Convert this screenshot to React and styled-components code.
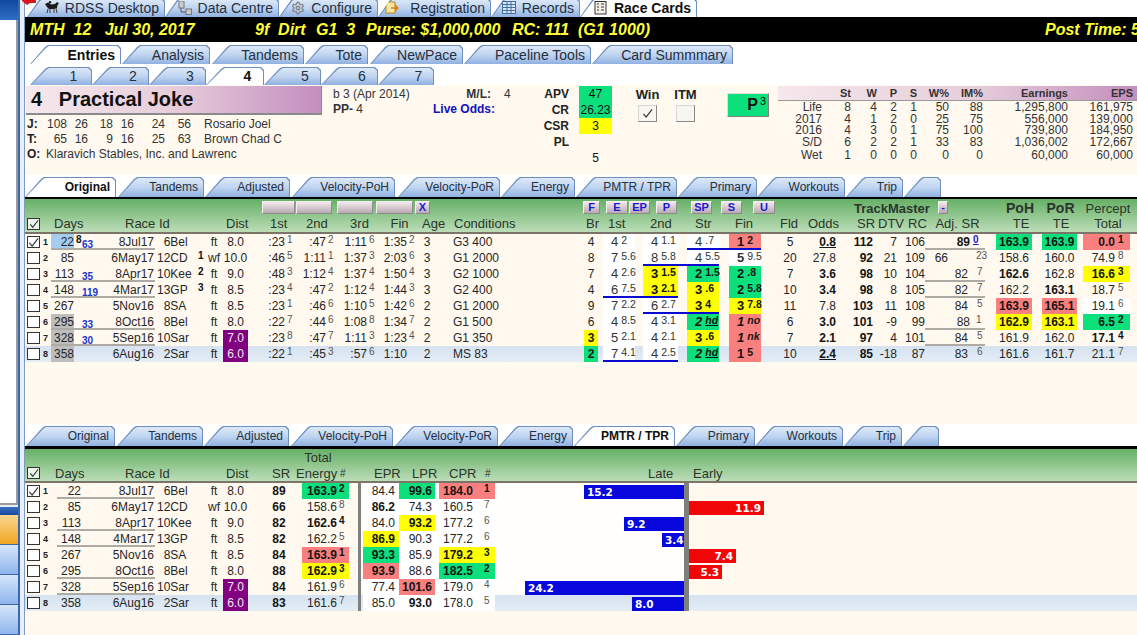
import React from 'react';
import styled, { createGlobalStyle } from 'styled-components';
import { Settings } from 'lucide-react';

const Global = createGlobalStyle`
  html, body { margin: 0; padding: 0; width: 1137px; height: 635px; overflow: hidden; background: #fff; }
  body { font-family: "Liberation Sans", Arial, sans-serif; font-size: 12px; color: #222; }
  * { box-sizing: border-box; }
`;

const TONES = {
  green: '#0be07c', yellow: '#ffff00', red: '#fa8080', blue: '#a5cbef',
  gray: '#bdbdbd', purple: '#800080', white: '#ffffff',
};
const CREAM = '#fff9ef';

const tpl = (list) => list.map(([n, w]) => `[${n}] ${w}px`).join(' ') + ' [end] 1fr';

const T1 = tpl([
  ['chk', 17], ['no', 9], ['days', 23], ['ds', 7], ['gap', 14], ['date', 60], ['track', 41], ['rs', 9],
  ['surf', 18], ['dist', 25], ['p1', 37], ['p1s', 7], ['p2', 34], ['p2s', 6], ['p3', 35], ['p3s', 7],
  ['p4', 33], ['p4s', 7], ['age', 26], ['cond', 144], ['br', 14], ['g0', 5], ['r1', 32], ['g1', 8],
  ['r2', 35], ['r2e', 9], ['r3', 32], ['r3e', 10], ['r4', 32], ['r4e', 14], ['fld', 30], ['odds', 31],
  ['sr', 37], ['dtv', 24], ['rc', 28], ['adj', 45], ['adjs', 15], ['adje', 11], ['poh', 36], ['g5', 10],
  ['por', 35], ['g6', 6], ['pct', 47],
]);

const T2 = tpl([
  ['chk', 17], ['no', 15], ['days', 24], ['date', 74], ['track', 41], ['g0', 9], ['surf', 18], ['dist', 25],
  ['g1', 14], ['sr', 34], ['g2', 6], ['en', 47], ['g3', 9], ['bar', 3], ['g4', 2], ['epr', 36], ['lpr', 36],
  ['g5', 4], ['cpr', 56], ['late', 189], ['div', 5],
]);

/* ---------- Shell ---------- */
const Root = styled.div`
  position: relative; display: flex; width: 1137px; height: 635px; overflow: hidden; background: #fff;
`;
const RedMark = styled.svg`
  position: absolute; left: 22px; top: 0; width: 14px; height: 5px; z-index: 3;
`;
const Side = styled.aside`
  flex: none; width: 25px; height: 100%; display: flex;
  border-right: 1px solid #7f9db9; background: #e9eff9;
`;
const Nav = styled.div`
  width: 20px; height: 100%; display: flex; flex-direction: column;
  border-right: 2px solid #3a69b0;
`;
const NavTop = styled.div`
  height: 20px; flex: none; background: linear-gradient(#0f4aa0, #2f6fc4);
`;
const NavBlank = styled.div`
  flex: 1; background: #fff; border-right: 2px solid #9a9a9a; border-bottom: 2px solid #9a9a9a;
`;
const NavHead = styled.div`
  height: 8px; flex: none; margin-top: 2px; background: linear-gradient(#3a6fc0, #174a9c);
`;
const NavTile = styled.div`
  height: 30px; flex: none; border-bottom: 1px solid #3e679f;
  background: ${(p) => (p.$on ? 'linear-gradient(#fbd68f, #f0a522)' : 'linear-gradient(#d6e6fb, #8fb5ec)')};
`;
const Main = styled.main`
  flex: 1; min-width: 0; display: flex; flex-direction: column; height: 100%; background: #fff;
`;

/* ---------- Tabs ---------- */
const TabStrip = styled.div`
  flex: none; display: flex; align-items: flex-end; height: ${(p) => p.$h}px;
  padding-top: ${(p) => p.$top || 0}px; background: #fff; overflow: hidden;
`;
const Tab = styled.div`
  --s: ${(p) => p.$s || 15}px;
  position: relative; flex: none; display: flex; align-items: center;
  justify-content: ${(p) => (p.$center ? 'center' : 'flex-end')};
  width: ${(p) => p.$w}px; height: ${(p) => p.$h}px; margin-left: ${(p) => p.$ml}px;
  padding: ${(p) => (p.$center ? '0 0 0 25px' : '0 6px 0 0')};
  font-size: ${(p) => p.$fs}px; font-weight: ${(p) => (p.$on ? 700 : 400)};
  color: ${(p) => (p.$on ? '#111' : '#24303f')}; white-space: nowrap;
  background: #6f8fc0;
  clip-path: polygon(0 100%, var(--s) 2px, calc(var(--s) + 3px) 0, calc(100% - 3px) 0, 100% 3px, 100% 100%);
  &::before {
    content: ''; position: absolute; inset: 1px 1px 0 1px;
    background: ${(p) => (p.$on ? '#fff' : 'linear-gradient(#dde9f8, #bfd4f0 50%, #90b1e1)')};
    clip-path: polygon(0 100%, var(--s) 2px, calc(var(--s) + 3px) 0, calc(100% - 3px) 0, 100% 3px, 100% 100%);
  }
`;
const TabText = styled.span`
  position: relative; display: inline-flex; align-items: center; gap: 5px;
`;
const TopIcon = styled.span`
  display: inline-flex; width: 14px; height: 14px; margin-right: ${(p) => p.$mr || 1}px;
`;

/* ---------- Race banner ---------- */
const Banner = styled.header`
  flex: none; height: 25px; display: flex; align-items: center; padding-left: 5px;
  background: #000; color: #ffff33; font-size: 16px; font-weight: 700; font-style: italic;
  white-space: pre; overflow: hidden;
`;
const Seg = styled.span`
  flex: none; width: ${(p) => p.$w}px;
`;
const Gap = styled.div`
  flex: none; height: ${(p) => p.$h}px; background: ${(p) => p.$bg || '#fff'};
`;

/* ---------- Horse panel ---------- */
const Panel = styled.section`
  flex: none; height: 90px; display: flex; background: ${CREAM};
`;
const HorseCol = styled.div`
  flex: none; width: 303px; padding: 1px 0 0 1px;
`;
const NameBar = styled.div`
  width: 296px; height: 29px; display: flex; align-items: center; padding-left: 5px;
  background: linear-gradient(90deg, #f6e8ec, #e6cdda 50%, #c48ebe);
  border-right: 1px solid #8a8a8a; border-bottom: 2px solid #8a8a8a;
  font-size: 20px; font-weight: 700; color: #111; white-space: pre;
`;
const People = styled.div`
  display: grid; grid-template-columns: 19px 21px 21px 25px 21px 31px 26px 1fr;
  grid-auto-rows: 15px; margin: 2px 0 0 -1px; padding-left: 2px; line-height: 15px; color: #333;
`;
const PLabel = styled.b`
  color: #222; font-size: 12px;
`;
const PNum = styled.span`
  text-align: right;
`;
const PName = styled.span`
  padding-left: 13px; white-space: nowrap;
`;
const POwner = styled.span`
  grid-column: 2 / -1; white-space: nowrap;
`;
const MetaCol = styled.div`
  flex: none; width: 192px; display: grid; grid-template-columns: 100px 58px 1fr;
  grid-auto-rows: 15px; padding: 2px 0 0 5px; line-height: 15px; color: #333; white-space: nowrap;
`;
const MetaLabel = styled.b`
  text-align: right; color: ${(p) => p.$c || '#333'};
`;
const MetaVal = styled.span`
  padding-left: 13px;
`;
const RateCol = styled.div`
  flex: none; width: 92px; display: grid; grid-template-columns: 49px 10px 33px; grid-auto-rows: 16px;
  padding-top: 1px; line-height: 16px;
`;
const RateLabel = styled.b`
  grid-column: 1; text-align: right; color: #222;
`;
const RateVal = styled.div`
  grid-column: 3; text-align: center; color: #111; font-weight: ${(p) => (p.$b ? 700 : 400)};
  background: ${(p) => TONES[p.$tone] || 'transparent'};
`;
const BetCol = styled.div`
  flex: none; width: 115px; display: flex; gap: 13px; padding: 2px 0 0 23px;
`;
const BetGroup = styled.div`
  display: flex; flex-direction: column; align-items: center; width: 25px;
  font-size: 13px; font-weight: 700; color: #222; line-height: 15px;
`;
const BetBox = styled.div`
  width: 19px; height: 17px; margin-top: 3px; display: flex; align-items: center; justify-content: center;
  background: #f8f6f0; border: 1px solid; border-color: #d8d8d8 #888 #888 #d8d8d8;
`;
const PButton = styled.div`
  flex: none; width: 42px; height: 24px; margin-top: 8px; display: flex; justify-content: flex-end; align-items: flex-start;
  padding: 1px 2px 0 0; background: #0be07c; font-size: 16px; font-weight: 700; color: #111; line-height: 20px;
  border: 1px solid; border-color: #e0e0e0 #808080 #808080 #e0e0e0;
  & sup { font-size: 11px; font-weight: 400; line-height: 12px; margin: 0 0 0 2px; }
`;
const Stats = styled.div`
  flex: none; width: 359px; margin: 1px 0 0 9px; 
`;
const statCols = '44px 29px 26px 20px 20px 32px 34px 85px 65px 4px';
const StatHead = styled.div`
  display: grid; grid-template-columns: ${statCols}; height: 15px; line-height: 14px;
  font-size: 11px; font-weight: 700; color: #333; text-align: right;
  background: linear-gradient(90deg, #f6e8ec, #e6cdda 55%, #c48ebe); border-bottom: 1px solid #999;
`;
const StatRow = styled.div`
  display: grid; grid-template-columns: ${statCols}; height: ${(p) => p.$h}px; line-height: ${(p) => p.$h}px;
  text-align: right; color: #333;
`;

/* ---------- Tables ---------- */
const BlackLine = styled.div`
  flex: none; height: ${(p) => p.$h}px; background: #000;
`;
const Head = styled.div`
  flex: none; height: ${(p) => p.$h}px; display: flex; flex-direction: column;
  background: linear-gradient(#66b066, #bcddb8);
  border-bottom: 2px solid #7c7468;
  color: #2b352b; font-size: 13px;
`;
const HeadStrip = styled.div`
  flex: 1; display: flex; align-items: ${(p) => p.$al || 'center'}; position: relative; white-space: nowrap;
`;
const HLabel = styled.div`
  flex: none; width: ${(p) => p.$w}px; margin-left: ${(p) => p.$ml}px; text-align: center;
  font-weight: ${(p) => (p.$b ? 700 : 400)}; font-size: ${(p) => p.$fs || 13}px; line-height: 15px;
`;
const HBtn = styled.div`
  flex: none; width: ${(p) => p.$w}px; height: 13px; margin-left: ${(p) => p.$ml}px; align-self: flex-start; margin-top: 2px;
  display: flex; align-items: center; justify-content: center; background: linear-gradient(#f3e9ed, #b9aab2);
  border: 1px solid; border-color: #f2eef0 #8b8b8b #8b8b8b #f2eef0;
  font-size: 11px; font-weight: 700; color: #1a1acc; line-height: 11px;
`;
const HBox = styled.div`
  flex: none; width: 13px; height: 12px; margin-left: ${(p) => p.$ml}px;
  background: #e9f3e7; border: 1px solid #333; display: flex; align-items: center; justify-content: center;
`;
const Rows = styled.div`
  flex: none; height: 128px; background: ${CREAM};
`;
const Row = styled.div`
  position: relative; display: grid; grid-template-columns: ${(p) => p.$tpl}; grid-template-rows: 16px; height: 16px;
  line-height: 16px; color: #262626;
  background: ${(p) => (p.$hi ? 'linear-gradient(#d6e2f0, #e4edf6)' : 'transparent')};
  & > * { grid-row: 1; }
`;
const C = styled.div`
  grid-column: ${(p) => p.$c} / span ${(p) => p.$span || 1};
  text-align: ${(p) => p.$a || 'left'}; white-space: nowrap; min-width: 0;
  padding: 0 ${(p) => p.$pr || 0}px 0 ${(p) => p.$pl || 0}px;
  font-weight: ${(p) => (p.$b ? 700 : 400)};
  text-decoration: ${(p) => (p.$u ? 'underline' : 'none')};
  background: ${(p) => TONES[p.$tone] || 'transparent'};
  color: ${(p) => (p.$tone === 'purple' ? '#f4e8f4' : p.$b ? '#151515' : 'inherit')};
`;
const Band = styled.div`
  grid-column: ${(p) => p.$from} / ${(p) => p.$to}; background: #fff;
`;
const Sup = styled.div`
  grid-column: ${(p) => p.$c} / span 1; font-size: 10px; line-height: 11px; padding-left: ${(p) => p.$pl || 2}px;
  color: ${(p) => (p.$b ? '#111' : '#555')}; font-weight: ${(p) => (p.$b ? 700 : 400)};
  ${(p) => (p.$link ? 'color:#1a1acc; text-decoration:underline; font-weight:700;' : '')}
`;
const InSup = styled.span`
  font-size: 10px; line-height: 11px; margin-left: ${(p) => p.$ml || 2}px; align-self: flex-start;
  color: ${(p) => (p.$b ? '#111' : '#555')}; font-weight: ${(p) => (p.$b ? 700 : 400)};
`;
const Split = styled.div`
  grid-column: ${(p) => p.$c} / span 1; display: flex; white-space: nowrap;
  background: ${(p) => TONES[p.$tone] || 'transparent'};
  font-weight: ${(p) => (p.$b ? 700 : 400)}; color: ${(p) => (p.$b ? '#151515' : 'inherit')};
`;
const SplitNum = styled.span`
  flex: none; width: ${(p) => p.$w}px; text-align: right;
`;
const Small = styled.div`
  grid-column: ${(p) => p.$c} / span 1; font-size: 10px; font-weight: 700; color: #2233cc;
  line-height: 10px; padding: 6px 0 0 1px; position: relative;
`;
const BoxCell = styled.div`
  grid-column: chk / span 1; width: 13px; height: 12px; margin: 2px 0 0 2px; background: #fff;
  border: 1px solid #333; display: flex; align-items: center; justify-content: center;
`;
const Num = styled.div`
  grid-column: no / span 1; font-size: 9px; font-weight: 700; padding-left: 1px; color: #222;
`;
const Rule = styled.div`
  position: absolute; grid-column: ${(p) => p.$from} / ${(p) => p.$to}; left: 0; right: 0; bottom: 0; height: 2px;
  background: ${(p) => p.$c}; z-index: 1;
`;
const Run = styled.div`
  grid-column: ${(p) => p.$c} / span 1; display: flex; padding-left: 8px;
  background: ${(p) => TONES[p.$tone] || '#fff'}; white-space: nowrap;
  font-size: 13px; font-weight: ${(p) => (p.$tone ? 700 : 400)}; color: ${(p) => (p.$tone ? '#151515' : '#333')};
  font-style: ${(p) => (p.$i ? 'italic' : 'normal')};
`;
const RunSup = styled.span`
  font-size: 10.5px; line-height: 12px; margin-left: 3px;
  ${(p) => (p.$u ? 'text-decoration: underline;' : '')}
`;
const TrackCell = styled.div`
  grid-column: ${(p) => p.$c} / span 1; display: flex;
  justify-content: ${(p) => (p.$end ? 'flex-end' : 'flex-start')}; align-items: flex-end;
  background: ${(p) => (p.$plain ? 'transparent' : '#fffefb')};
`;
const BarCell = styled.div`
  grid-column: ${(p) => p.$c} / span 1; display: flex; align-items: flex-end;
  justify-content: ${(p) => (p.$end ? 'flex-end' : 'flex-start')};
`;
const Bar = styled.div`
  height: 14px; flex: none; padding: 0 3px; line-height: 14px; font-family: "DejaVu Sans", sans-serif;
  font-size: 10.5px; font-weight: 700; color: #fff; background: ${(p) => p.$c};
  text-align: ${(p) => (p.$end ? 'right' : 'left')}; overflow: hidden; white-space: nowrap;
`;
const Divider = styled.div`
  grid-column: ${(p) => p.$c} / span 1; background: #7f7f7f;
`;
const Fill = styled.div`
  flex: 1; background: ${CREAM};
`;

/* ---------- Small drawings ---------- */
const Tick = ({ s = 11 }) => (
  <svg width={s} height={s} viewBox="0 0 12 12">
    <path d="M1.5 6.5 L4.5 10 L11 1.5" fill="none" stroke="#333" strokeWidth="1.3" />
  </svg>
);
const HorseIcon = () => (
  <svg width="14" height="14" viewBox="0 0 14 14">
    <path d="M0 3 L3 1.5 L6 3.5 L10 3 L12 1 L14 2.5 L12.5 4 L12 7 L9 8 L4 8 L2 6 Z" fill="#1b1b1b" />
    <path d="M3 8 L2 12 M5 8 L5 12 M9 8 L9 12 M11 7 L12 12" stroke="#444" strokeWidth="1.1" />
    <circle cx="5" cy="1.3" r="1.2" fill="#1b1b1b" />
  </svg>
);
const DataIcon = () => (
  <svg width="14" height="14" viewBox="0 0 14 14">
    <rect x="1" y="0" width="5" height="7" fill="#c9cdd2" stroke="#777" />
    <rect x="8" y="8" width="5.5" height="5.5" fill="#c9cdd2" stroke="#777" />
    <path d="M3 7 V11 H8" fill="none" stroke="#555" />
  </svg>
);
const RegIcon = () => (
  <svg width="14" height="14" viewBox="0 0 14 14">
    <rect x="1" y="1" width="9" height="11" fill="#f8e7a0" stroke="#b88a1e" />
    <path d="M6 7 L13 7 M10 4 L13 7 L10 10" fill="none" stroke="#d9801a" strokeWidth="1.5" />
  </svg>
);
const GridIcon = () => (
  <svg width="14" height="14" viewBox="0 0 14 14">
    <rect x="0.5" y="0.5" width="13" height="12" fill="#dbe6f2" stroke="#40709f" />
    <path d="M0.5 3.5 H13.5 M0.5 6.5 H13.5 M0.5 9.5 H13.5 M5 0.5 V12.5 M9 0.5 V12.5" stroke="#40709f" />
  </svg>
);
const CardIcon = () => (
  <svg width="14" height="14" viewBox="0 0 14 14">
    <rect x="1" y="0.5" width="11" height="12.5" fill="#f4f2e8" stroke="#333" />
    <path d="M3 3 H5 M3 6 H5 M3 9 H5 M7 3 H10 M7 6 H10 M7 9 H10" stroke="#333" />
  </svg>
);

/* ---------- Data ---------- */
const ORIGIN = 25;
const place = (items) => {
  let prev = ORIGIN;
  return items.map((it) => {
    const ml = it[0] - prev;
    prev = it[1];
    return { x0: it[0], w: it[1] - it[0], ml, label: it[2], opt: it[3] || {} };
  });
};

const TOP = place([
  [27, 165, 'RDSS Desktop', { icon: <HorseIcon />, mr: 1 }],
  [165, 279, 'Data Centre', { icon: <DataIcon />, mr: 0 }],
  [279, 378, 'Configure', { icon: <Settings size={14} color="#8a8a8a" strokeWidth={2.4} />, mr: 0 }],
  [378, 491, 'Registration', { icon: <RegIcon />, mr: 6 }],
  [491, 580, 'Records', { icon: <GridIcon />, mr: 0 }],
  [580, 697, 'Race Cards', { icon: <CardIcon />, mr: 1, on: true }],
]);
const MAIN = place([
  [30, 121, 'Entries', { on: true }], [122, 210, 'Analysis'], [212, 304, 'Tandems'], [305, 368, 'Tote'],
  [370, 463, 'NewPace'], [464, 591, 'Paceline Tools'], [592, 733, 'Card Summmary'],
]);
const RACES = place([
  [30, 92, '1'], [92, 149, '2'], [149, 206, '3'], [206, 264, '4', { on: true }], [264, 321, '5'], [321, 378, '6'], [378, 434, '7'],
]);
const SUB1 = place([
  [25, 116, 'Original', { on: true }], [118, 204, 'Tandems'], [205, 290, 'Adjusted'], [292, 395, 'Velocity-PoH'],
  [398, 500, 'Velocity-PoR'], [501, 575, 'Energy'], [576, 677, 'PMTR / TPR'], [678, 757, 'Primary'],
  [757, 845, 'Workouts'], [846, 903, 'Trip'], [904, 941, ''],
]);
const SUB2 = place([
  [26, 115, 'Original'], [117, 203, 'Tandems'], [204, 289, 'Adjusted'], [291, 393, 'Velocity-PoH'],
  [395, 498, 'Velocity-PoR'], [499, 573, 'Energy'], [574, 675, 'PMTR / TPR', { on: true }], [676, 755, 'Primary'],
  [755, 843, 'Workouts'], [844, 902, 'Trip'], [903, 939, ''],
]);

const H1A = place([
  [262, 295, '', { btn: 1 }], [296, 332, '', { btn: 1 }], [337, 373, '', { btn: 1 }], [376, 413, '', { btn: 1 }], [415, 430, 'X', { btn: 1 }],
  [583, 600, 'F', { btn: 1 }], [606, 628, 'E', { btn: 1 }], [629, 650, 'EP', { btn: 1 }], [656, 677, 'P', { btn: 1 }],
  [691, 712, 'SP', { btn: 1 }], [721, 742, 'S', { btn: 1 }], [753, 775, 'U', { btn: 1 }],
  [854, 925, 'TrackMaster', { b: 1 }], [938, 948, '-', { btn: 1 }],
  [1006, 1034, 'PoH', { b: 1, fs: 14 }], [1046, 1075, 'PoR', { b: 1, fs: 14 }], [1083, 1133, 'Percept'],
]);
const H1B = place([
  [54, 81, 'Days'], [125, 167, 'Race Id'], [226, 248, 'Dist'], [270, 286, '1st'], [306, 327, '2nd'], [349, 370, '3rd'],
  [389, 410, 'Fin'], [422, 443, 'Age'], [454, 513, 'Conditions'], [586, 598, 'Br'], [608, 625, '1st'], [650, 670, '2nd'],
  [695, 710, 'Str'], [735, 752, 'Fin'], [780, 797, 'Fld'], [808, 838, 'Odds'], [857, 874, 'SR'], [878, 903, 'DTV'],
  [908, 925, 'RC'], [935, 980, 'Adj. SR'], [1010, 1032, 'TE'], [1050, 1072, 'TE'], [1083, 1133, 'Total'],
]);
const H2A = place([[300, 336, 'Total']]);
const H2B = place([
  [55, 82, 'Days'], [125, 167, 'Race Id'], [226, 248, 'Dist'], [272, 287, 'SR'], [296, 336, 'Energy'], [340, 344, '#', { fs: 10 }],
  [374, 399, 'EPR'], [412, 436, 'LPR'], [449, 475, 'CPR'], [485, 489, '#', { fs: 10 }], [648, 672, 'Late'], [693, 720, 'Early'],
]);

const FS = '\u2007';
const BASE = [
  { n: 1, chk: true, days: '22', ds: '8', dt: 'blue', gap: '63', date: '8Jul17', track: FS + '6Bel', dist: '8.0', surf: 'ft', rule: true },
  { n: 2, days: '85', date: '6May17', track: '12CD', rs: '1', surf: 'wf', dist: '10.0' },
  { n: 3, days: '113', gap: '35', date: '8Apr17', track: '10Kee', rs: '2', surf: 'ft', dist: '9.0', rule: true },
  { n: 4, days: '148', gap: '119', date: '4Mar17', track: '13GP', rs: '3', surf: 'ft', dist: '8.5', rule: true },
  { n: 5, days: '267', date: '5Nov16', track: FS + '8SA', surf: 'ft', dist: '8.5' },
  { n: 6, days: '295', dt: 'gray', gap: '33', date: '8Oct16', track: FS + '8Bel', surf: 'ft', dist: '8.0', rule: true },
  { n: 7, days: '328', dt: 'gray', gap: '30', date: '5Sep16', track: '10Sar', surf: 'ft', dist: '7.0', dk: true, rule: true },
  { n: 8, days: '358', dt: 'gray', date: '6Aug16', track: FS + '2Sar', surf: 'ft', dist: '6.0', dk: true },
];
const FIRST = [
  {
    pace: [[':23', '1'], [':47', '2'], ['1:11', '6'], ['1:35', '2']], age: '3', cond: 'G3 400', br: '4',
    runs: [['4', '2'], ['4', '1.1'], ['4', '.7'], ['1', '2', 'red']], fld: '5', odds: '0.8', ob: 1, ou: 1, sr: '112', dtv: '7', rc: '106',
    adj: ['89', '0', 0, 3, true], poh: ['163.9', 'green'], por: ['163.9', 'green'], pct: ['0.0', '1', 'red', 1], blue: ['r3', 'r4e'],
  },
  {
    pace: [[':46', '5'], ['1:11', '1'], ['1:37', '3'], ['2:03', '6']], age: '3', cond: 'G1 2000', br: '8',
    runs: [['7', '5.6'], ['8', '5.8'], ['4', '5.5'], ['5', '9.5', null, 0, 1]], fld: '20', odds: '27.8', sr: '92', dtv: '21', rc: '109',
    adj: ['66', '23', 22, 6], poh: ['158.6'], por: ['160.0'], pct: ['74.9', '8'], blue: ['r2', 'r3e'],
  },
  {
    pace: [[':48', '3'], ['1:12', '4'], ['1:37', '4'], ['1:50', '4']], age: '3', cond: 'G2 1000', br: '7',
    runs: [['4', '2.6'], ['3', '1.5', 'yellow'], ['2', '1.5', 'green'], ['2', '.8', 'green']], fld: '7', odds: '3.6', ob: 1, sr: '98', dtv: '10', rc: '104',
    adj: ['82', '7', 2, 7], poh: ['162.6', null, 1], por: ['162.8'], pct: ['16.6', '3', 'yellow', 1],
  },
  {
    pace: [[':23', '4'], [':47', '2'], ['1:12', '4'], ['1:44', '3']], age: '3', cond: 'G2 400', br: '4',
    runs: [['6', '7.5'], ['3', '2.1', 'yellow'], ['3', '.6', 'yellow'], ['2', '5.8', 'green']], fld: '10', odds: '3.4', ob: 1, sr: '98', dtv: '8', rc: '105',
    adj: ['82', '7', 2, 7], poh: ['162.2'], por: ['163.1', null, 1], pct: ['18.7', '5'], blue: ['r1', 'r2e'],
  },
  {
    pace: [[':23', '1'], [':46', '6'], ['1:10', '5'], ['1:42', '6']], age: '2', cond: 'G1 2000', br: '9',
    runs: [['7', '2.2'], ['6', '2.7'], ['3', '4', 'yellow'], ['3', '7.8', 'yellow']], fld: '11', odds: '7.8', sr: '103', dtv: '11', rc: '108',
    adj: ['84', '5', 2, 7], poh: ['163.9', 'red'], por: ['165.1', 'red'], pct: ['19.1', '6', 'white'], blue: ['r2', 'r3e'],
  },
  {
    pace: [[':22', '7'], [':44', '6'], ['1:08', '8'], ['1:34', '7']], age: '2', cond: 'G1 500', br: '6',
    runs: [['4', '8.5'], ['4', '3.1'], ['2', 'hd', 'green', 1], ['1', 'no', 'red', 1]], fld: '6', odds: '3.0', ob: 1, sr: '101', dtv: '-9', rc: '99',
    adj: ['88', '1', 0, 6, false, -3], poh: ['162.9', 'yellow'], por: ['163.1', 'yellow'], pct: ['6.5', '2', 'green', 1],
  },
  {
    pace: [[':23', '8'], [':47', '7'], ['1:11', '3'], ['1:23', '4']], age: '2', cond: 'G1 350', br: '3', brt: 'yellow',
    runs: [['5', '2.1'], ['4', '2.1'], ['3', '.6', 'yellow'], ['1', 'nk', 'red', 1]], fld: '7', odds: '2.1', ob: 1, sr: '97', dtv: '4', rc: '101',
    adj: ['84', '5', 2, 7], poh: ['161.9'], por: ['162.0'], pct: ['17.1', '4', null, 1],
  },
  {
    pace: [[':22', '1'], [':45', '3'], [':57', '6'], ['1:10', '']], age: '2', cond: 'MS 83', br: '2', brt: 'green',
    runs: [['7', '4.1'], ['4', '2.5'], ['2', 'hd', 'green', 1], ['1', '5', 'red']], fld: '10', odds: '2.4', ob: 1, ou: 1, sr: '85', dtv: '-18', rc: '87',
    adj: ['83', '6', 2, 7], poh: ['161.6'], por: ['161.7'], pct: ['21.1', '7'], blue: ['r1', 'r2e'],
  },
];
const SECOND = [
  { sr: '89', en: ['163.9', '2', 'green', 1], epr: ['84.4'], lpr: ['99.6', 'green', 1], cpr: ['184.0', '1', 'red', 1], late: 15.2 },
  { sr: '66', en: ['158.6', '8'], epr: ['86.2', null, 1], lpr: ['74.3'], cpr: ['160.5', '7'], early: 11.9 },
  { sr: '82', en: ['162.6', '4', null, 1], epr: ['84.0'], lpr: ['93.2', 'yellow', 1], cpr: ['177.2', '6'], late: 9.2 },
  { sr: '82', en: ['162.2', '5'], epr: ['86.9', 'yellow', 1], lpr: ['90.3'], cpr: ['177.2', '6'], late: 3.4 },
  { sr: '84', en: ['163.9', '1', 'red', 1], epr: ['93.3', 'green', 1], lpr: ['85.9'], cpr: ['179.2', '3', 'yellow', 1], early: 7.4 },
  { sr: '88', en: ['162.9', '3', 'yellow', 1], epr: ['93.9', 'red', 1], lpr: ['88.6'], cpr: ['182.5', '2', 'green', 1], early: 5.3 },
  { sr: '84', en: ['161.9', '6'], epr: ['77.4'], lpr: ['101.6', 'red', 1], cpr: ['179.0', '4'], late: 24.2 },
  { sr: '83', en: ['161.6', '7'], epr: ['85.0'], lpr: ['93.0', null, 1], cpr: ['178.0', '5'], late: 8.0 },
];
const STATS = [
  ['Life', '8', '4', '2', '1', '50', '88', '1,295,800', '161,975', 12],
  ['2017', '4', '1', '2', '0', '25', '75', '556,000', '139,000', 12],
  ['2016', '4', '3', '0', '1', '75', '100', '739,800', '184,950', 11],
  ['S/D', '6', '2', '2', '1', '33', '83', '1,036,002', '172,667', 13],
  ['Wet', '1', '0', '0', '0', '0', '0', '60,000', '60,000', 12],
];

/* ---------- Composition ---------- */
const Tabs = ({ items, h, fs, s, center }) =>
  items.map((t) => (
    <Tab key={t.x0} $w={t.w} $ml={t.ml} $h={h} $fs={fs} $s={s} $on={t.opt.on} $center={center}>
      <TabText>
        {t.opt.icon && <TopIcon $mr={t.opt.mr}>{t.opt.icon}</TopIcon>}
        {t.label}
      </TabText>
    </Tab>
  ));

const Strip = ({ items }) =>
  items.map((t) =>
    t.opt.btn ? (
      <HBtn key={t.x0} $w={t.w} $ml={t.ml}>{t.label}</HBtn>
    ) : (
      <HLabel key={t.x0} $w={t.w} $ml={t.ml} $b={t.opt.b} $fs={t.opt.fs}>{t.label}</HLabel>
    )
  );

const Common = ({ r, noSup }) => (
  <>
    <BoxCell>{r.chk && <Tick />}</BoxCell>
    <Num>{r.n}</Num>
    <C $c="surf" $a="center">{r.surf}</C>
    <C $c="dist" $a="center" $tone={r.dk ? 'purple' : undefined}>{r.dist}</C>
    <C $c="date" $a="right" $pr={1}>{r.date}</C>
    <C $c="track" $pl={2}>{r.track}</C>
    {r.rule && <Rule $from="days" $to="track" $c="#aeaaa4" />}
  </>
);

const RunCell = ({ c, run }) => {
  const [lead, sup, tone, italic, bold] = run;
  return (
    <Run $c={c} $tone={tone} $i={italic}>
      {bold ? <b>{lead}</b> : lead}
      <RunSup $u={sup === 'hd'}>{sup}</RunSup>
    </Run>
  );
};

const FirstRow = ({ r, d }) => (
  <Row $tpl={T1} $hi={r.n === 8}>
    <Common r={r} />
    <C $c="days" $a="right" $tone={r.dt}>{r.days}</C>
    {r.ds && <Sup $c="ds" $b>{r.ds}</Sup>}
    {r.gap && <Small $c="gap">{r.gap}</Small>}
    {r.rs && <Sup $c="rs" $b>{r.rs}</Sup>}
    {d.pace.map(([t, s], i) => (
      <React.Fragment key={i}>
        <C $c={`p${i + 1}`} $a="right">{t}</C>
        <Sup $c={`p${i + 1}s`}>{s}</Sup>
      </React.Fragment>
    ))}
    <C $c="age" $a="center">{d.age}</C>
    <C $c="cond" $pl={13}>{d.cond}</C>
    <C $c="br" $a="center" $tone={d.brt} $b={!!d.brt}>{d.br}</C>
    {d.runs.map((run, i) => <RunCell key={i} c={`r${i + 1}`} run={run} />)}
    <C $c="fld" $a="center">{d.fld}</C>
    <C $c="odds" $a="right" $b={d.ob} $u={d.ou}>{d.odds}</C>
    <C $c="sr" $a="right" $b>{d.sr}</C>
    <C $c="dtv" $a="right">{d.dtv}</C>
    <C $c="rc" $a="right">{d.rc}</C>
    <C $c="adj" $a="right" $pr={d.adj[2]} $b={d.adj[4]}>{d.adj[0]}</C>
    <Sup $c="adjs" $pl={d.adj[3]} $link={d.adj[4]}>{d.adj[1]}</Sup>
    {r.rule && <Rule $from="adj" $to="adje" $c="#aeaaa4" />}
    <C $c="poh" $a="center" $tone={d.poh[1]} $b={d.poh[1] || d.poh[2]}>{d.poh[0]}</C>
    <C $c="por" $a="center" $tone={d.por[1]} $b={d.por[1] || d.por[2]}>{d.por[0]}</C>
    <Split $c="pct" $tone={d.pct[2]} $b={d.pct[3]}>
      <SplitNum $w={32}>{d.pct[0]}</SplitNum>
      <InSup $ml={3} $b={d.pct[3]}>{d.pct[1]}</InSup>
    </Split>
    {d.blue && <Rule $from={d.blue[0]} $to={d.blue[1]} $c="#0a0ad0" />}
  </Row>
);

const LATE_SCALE = 6.55;
const EARLY_SCALE = 6.3;

const SecondRow = ({ r, d }) => (
  <Row $tpl={T2} $hi={r.n === 8}>
    <Band $from="epr" $to="late" />
    <Common r={r} />
    <C $c="days" $a="right">{r.days}</C>
    <C $c="sr" $a="center" $b>{d.sr}</C>
    <Split $c="en" $tone={d.en[2]} $b={d.en[3]}>
      <SplitNum $w={35}>{d.en[0]}</SplitNum>
      <InSup $b={d.en[3]}>{d.en[1]}</InSup>
    </Split>
    <Divider $c="bar" />
    <C $c="epr" $a="right" $pr={4} $tone={d.epr[1]} $b={d.epr[1] || d.epr[2]}>{d.epr[0]}</C>
    <C $c="lpr" $a="right" $pr={3} $tone={d.lpr[1]} $b={d.lpr[1] || d.lpr[2]}>{d.lpr[0]}</C>
    <Split $c="cpr" $tone={d.cpr[2]} $b={d.cpr[3]}>
      <SplitNum $w={34}>{d.cpr[0]}</SplitNum>
      <InSup $ml={11} $b={d.cpr[3]}>{d.cpr[1]}</InSup>
    </Split>
    <TrackCell $c="late" $end $plain={r.n === 8}>
      {d.late && (
        <Bar $c="#0808dc" style={{ width: Math.round(d.late * LATE_SCALE) }}>{d.late.toFixed(1)}</Bar>
      )}
    </TrackCell>
    <Divider $c="div" />
    <BarCell $c="end">
      {d.early && (
        <Bar $c="#f00808" $end style={{ width: Math.round(d.early * EARLY_SCALE) }}>{d.early.toFixed(1)}</Bar>
      )}
    </BarCell>
  </Row>
);

export default function App() {
  return (
    <Root>
      <Global />
      <RedMark viewBox="0 0 14 5">
        <path d="M0 0 H14 V3 H8 L5 5 L0 1 Z" fill="#d81818" />
      </RedMark>
      <Side>
        <Nav>
          <NavTop />
          <NavBlank />
          <NavHead />
          <NavTile $on />
          <NavTile />
          <NavTile />
          <NavTile />
        </Nav>
      </Side>
      <Main>
        <TabStrip $h={17}>
          <Tabs items={TOP} h={19} fs={14} s={12} />
        </TabStrip>
        <Banner>
          <Seg $w={225}>{'MTH  12   Jul 30, 2017'}</Seg>
          <Seg $w={61}>{'9f  Dirt'}</Seg>
          <Seg $w={50}>{'G1  3'}</Seg>
          <Seg $w={146}>Purse: $1,000,000</Seg>
          <Seg $w={66}>RC: 111</Seg>
          <Seg $w={467}>(G1 1000)</Seg>
          <Seg $w={95}>Post Time: 5</Seg>
        </Banner>
        <Gap $h={3} />
        <TabStrip $h={19}>
          <Tabs items={MAIN} h={19} fs={14} />
        </TabStrip>
        <Gap $h={3} />
        <TabStrip $h={18}>
          <Tabs items={RACES} h={18} fs={14} center />
        </TabStrip>

        <Panel>
          <HorseCol>
            <NameBar>{'4   Practical Joke'}</NameBar>
            <People>
              <PLabel>J:</PLabel>
              <PNum>108</PNum><PNum>26</PNum><PNum>18</PNum><PNum>16</PNum><PNum>24</PNum><PNum>56</PNum>
              <PName>Rosario Joel</PName>
              <PLabel>T:</PLabel>
              <PNum>65</PNum><PNum>16</PNum><PNum>9</PNum><PNum>16</PNum><PNum>25</PNum><PNum>63</PNum>
              <PName>Brown Chad C</PName>
              <PLabel>O:</PLabel>
              <POwner>Klaravich Stables, Inc. and Lawrenc</POwner>
            </People>
          </HorseCol>
          <MetaCol>
            <span>b  3  (Apr 2014)</span>
            <MetaLabel>M/L:</MetaLabel>
            <MetaVal>4</MetaVal>
            <span><b>PP-</b> 4</span>
            <MetaLabel $c="#1212c4">Live Odds:</MetaLabel>
          </MetaCol>
          <RateCol>
            <RateLabel>APV</RateLabel><RateVal $tone="green">47</RateVal>
            <RateLabel>CR</RateLabel><RateVal $tone="green">26.23</RateVal>
            <RateLabel>CSR</RateLabel><RateVal $tone="yellow">3</RateVal>
            <RateLabel>PL</RateLabel><RateVal />
            <span /><span /><RateVal>5</RateVal>
          </RateCol>
          <BetCol>
            <BetGroup>Win<BetBox><Tick s={11} /></BetBox></BetGroup>
            <BetGroup>ITM<BetBox /></BetGroup>
          </BetCol>
          <PButton>P<sup>3</sup></PButton>
          <Stats>
            <StatHead>
              <span /><span>St</span><span>W</span><span>P</span><span>S</span><span>W%</span><span>IM%</span><span>Earnings</span><span>EPS</span>
            </StatHead>
            {STATS.map((s) => (
              <StatRow key={s[0]} $h={s[9]}>
                {s.slice(0, 9).map((v, i) => <span key={i}>{v}</span>)}
              </StatRow>
            ))}
          </Stats>
        </Panel>

        <TabStrip $h={22}>
          <Tabs items={SUB1} h={20} fs={12} s={16} />
        </TabStrip>
        <BlackLine $h={2} />
        <Head $h={35}>
          <HeadStrip $al="flex-end"><Strip items={H1A} /></HeadStrip>
          <HeadStrip>
            <HBox $ml={2}><Tick s={10} /></HBox>
            <Strip items={H1B.map((t, i) => (i === 0 ? { ...t, ml: t.ml - 15 } : t))} />
          </HeadStrip>
        </Head>
        <Rows>
          {BASE.map((r, i) => <FirstRow key={r.n} r={r} d={FIRST[i]} />)}
        </Rows>

        <Gap $h={62} $bg={CREAM} />
        <TabStrip $h={22} $top={2}>
          <Tabs items={SUB2} h={20} fs={12} s={16} />
        </TabStrip>
        <BlackLine $h={3} />
        <Head $h={34}>
          <HeadStrip $al="flex-end"><Strip items={H2A} /></HeadStrip>
          <HeadStrip>
            <HBox $ml={2}><Tick s={10} /></HBox>
            <Strip items={H2B.map((t, i) => (i === 0 ? { ...t, ml: t.ml - 15 } : t))} />
          </HeadStrip>
        </Head>
        <Rows>
          {BASE.map((r, i) => <SecondRow key={r.n} r={r} d={SECOND[i]} />)}
        </Rows>
        <Fill />
      </Main>
    </Root>
  );
}
